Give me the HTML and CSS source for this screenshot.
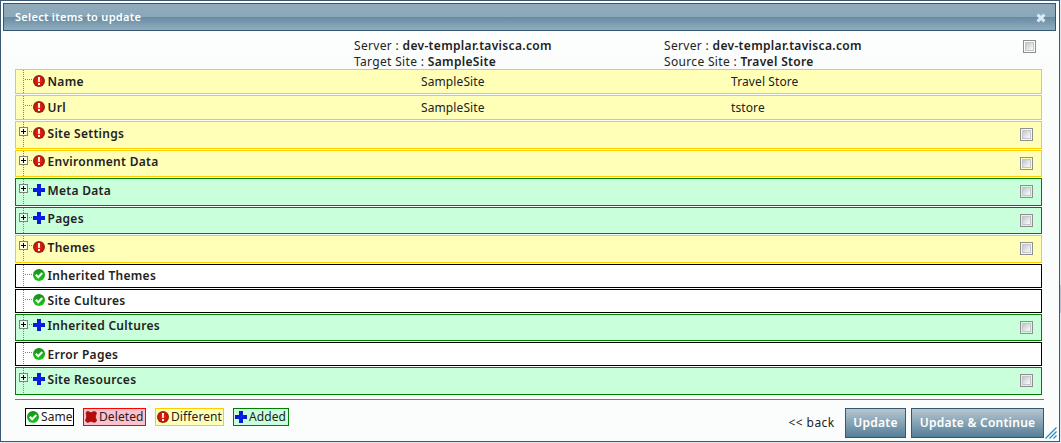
FILE: index.html
```html
<!DOCTYPE html>
<html lang="en">
<head>
<meta charset="utf-8">
<title>Select items to update</title>
<link rel="stylesheet" href="styles.css">
</head>
<body>
<svg class="defs" width="0" height="0" aria-hidden="true">
  <defs>
    <radialGradient id="red"><stop offset="0" stop-color="#f42a12"/><stop offset=".6" stop-color="#d51607"/><stop offset="1" stop-color="#8c2412"/></radialGradient>
    <linearGradient id="green" x2="0" y2="1"><stop offset="0" stop-color="#168c16"/><stop offset="1" stop-color="#16cb16"/></linearGradient>
    <linearGradient id="blue" x2="1" y2="1"><stop offset="0" stop-color="#0711a5"/><stop offset=".5" stop-color="#0820ee"/><stop offset="1" stop-color="#0710a2"/></linearGradient>
    <symbol id="different" viewBox="0 0 12 12"><circle cx="6" cy="6" r="6" fill="url(#red)"/><path d="M4.900 2h2.200l-.3 5H5.200zM5 8h2v2H5z" fill="#fff"/></symbol>
    <symbol id="same" viewBox="0 0 12 12"><circle cx="6" cy="6" r="6" fill="url(#green)"/><path d="M2.800 5.700l2.400 2.500L9.300 4" fill="none" stroke="#fff" stroke-width="2"/></symbol>
    <symbol id="added" viewBox="0 0 12 12"><path d="M4 0h4v4h4v4H8v4H4V8H0V4h4z" fill="url(#blue)"/></symbol>
    <symbol id="deleted" viewBox="0 0 12 12"><path d="M1 1.600L2.500.3 6 1.700 9.500.3 11.500 1.800 10.300 6l1.400 3.800-2 1.700L6 10.200l-3.500 1.300L.4 9.800 1.700 6z" fill="#b80b0b" stroke="#8d1010" stroke-width=".7"/></symbol>
  </defs>
</svg>
<div class="dialog">
  <div class="titlebar"><span class="title">Select items to update</span>
    <svg class="close" viewBox="0 0 10 10"><path d="M1.600 1.600l6.800 6.800m0-6.800L1.600 8.400" stroke="#dceaf5" stroke-width="3"/></svg>
  </div>
  <div class="sites">
    <div class="site"><div><span>Server : </span><b>dev-templar.tavisca.com</b></div><div><span>Target Site : </span><b>SampleSite</b></div></div>
    <div class="site"><div><span>Server : </span><b>dev-templar.tavisca.com</b></div><div><span>Source Site : </span><b>Travel Store</b></div></div>
    <i class="check"></i>
  </div>
  <div class="rows">
    <div class="row different h25"><i class="tree"></i><svg><use href="#different"/></svg><b>Name</b><span class="value">SampleSite</span><span class="value">Travel Store</span></div>
    <div class="row different h25"><i class="tree"></i><svg><use href="#different"/></svg><b>Url</b><span class="value">SampleSite</span><span class="value">tstore</span></div>
    <div class="row different h28"><i class="tree plus"></i><svg><use href="#different"/></svg><b>Site Settings</b><i class="check"></i></div>
    <div class="row different h27"><i class="tree plus"></i><svg><use href="#different"/></svg><b>Environment Data</b><i class="check"></i></div>
    <div class="row added h28"><i class="tree plus"></i><svg><use href="#added"/></svg><b>Meta Data</b><i class="check"></i></div>
    <div class="row added h27"><i class="tree plus"></i><svg><use href="#added"/></svg><b>Pages</b><i class="check"></i></div>
    <div class="row different h28"><i class="tree plus"></i><svg><use href="#different"/></svg><b>Themes</b><i class="check"></i></div>
    <div class="row same h24"><i class="tree"></i><svg><use href="#same"/></svg><b>Inherited Themes</b></div>
    <div class="row same h24"><i class="tree"></i><svg><use href="#same"/></svg><b>Site Cultures</b></div>
    <div class="row added h27"><i class="tree plus"></i><svg><use href="#added"/></svg><b>Inherited Cultures</b><i class="check"></i></div>
    <div class="row same h24 low"><i class="tree"></i><svg><use href="#same"/></svg><b>Error Pages</b></div>
    <div class="row added h28"><i class="tree plus"></i><svg><use href="#added"/></svg><b>Site Resources</b><i class="check"></i></div>
  </div>
  <div class="footer">
    <div class="legend">
      <div class="key same k1"><svg><use href="#same"/></svg><span>Same</span></div>
      <div class="key deleted k2"><svg><use href="#deleted"/></svg><span>Deleted</span></div>
      <div class="key different k3"><svg><use href="#different"/></svg><span>Different</span></div>
      <div class="key added k4"><svg><use href="#added"/></svg><span>Added</span></div>
    </div>
    <div class="actions"><a class="back">&lt;&lt; back</a><div class="button update">Update</div><div class="button continue">Update &amp; Continue</div></div>
  </div>
  <svg class="grip" viewBox="0 0 12 12"><path d="M.5 11.500l11-11m-7 11l7-7m-3 7l3-3" stroke="#2088d0" stroke-width="1.200" fill="none"/></svg>
</div>
<div class="edge"></div>
</body>
</html>
```

FILE: styles.css
```css
*, *::before { box-sizing: border-box; }
body { margin: 0; width: 1061px; height: 443px; overflow: hidden; display: flex; background: #dfe8f0; font: 12px/16px "Noto Sans", "Open Sans", sans-serif; color: #222; }
.defs { position: absolute; }
b { font-weight: 600; }
.dialog { position: relative; width: 1060px; height: 442px; border: 1px solid #3b5875; background: linear-gradient(#fff, #fbfdfd 60px); padding: 2px; }
.edge { width: 1px; height: 28px; margin-top: 285px; background: #b9c3d4; }
.titlebar { display: flex; justify-content: space-between; width: 1053px; height: 28px; border: 1px solid #355772; background: linear-gradient(#8faabb 0, #8ba8b9 13px, #668ca3 13px, #92adbd 26px); padding: 5px 9px 0 11px; color: #fff; }
.title { font-size: 11px; font-weight: 600; letter-spacing: .28px; }
.close { width: 10px; height: 10px; margin-top: 4px; }
.sites { display: flex; height: 38px; padding: 7px 0 0 351px; }
.site { width: 310px; white-space: pre; letter-spacing: .33px; }
.sites .check { margin: 2px 0 0 49px; }
.check { width: 13px; height: 13px; flex: none; border: 1px solid #8e8f8f; background: linear-gradient(135deg, #b9bec6, #f6f6f6 80%) content-box #f4f4f4; padding: 1px; outline: 1px solid #c4c6c9; outline-offset: -3px; }
.rows { display: flex; flex-direction: column; gap: 1px; padding-left: 12px; }
.row { display: flex; width: 1027px; border: 1px solid; padding-left: 3px; }
.h24 { height: 24px; } .h25 { height: 25px; } .h27 { height: 27px; } .h28 { height: 28px; }
.different { border-color: #fc0; background: #ffffb8; }
.added { border-color: #008000; background: #c9ffdb; }
.same { border-color: #000; background: #fff; }
.deleted { border-color: red; background: #ffc0cb; }
.row svg { width: 12px; height: 12px; flex: none; margin-top: 5px; }
.h24 svg, .h27 svg { margin-top: 4px; }
.row b { width: 373px; margin: 4px 0 0 2.5px; letter-spacing: .3px; }
.h24 b, .h27 b { margin-top: 3px; }
.low svg { margin-top: 5px; }
.low b { margin-top: 4px; }
.value { width: 310px; margin-top: 4px; letter-spacing: .1px; position: relative; left: .5px; }
.row .check { margin: 6px 8px 0 auto; }
.row > .tree { width: 14px; flex: none; background: repeating-linear-gradient(#808080 0 1px, transparent 1px 2px) 4px 0 / 1px 100% no-repeat, repeating-linear-gradient(90deg, #808080 0 1px, transparent 1px 2px) 6px 9px / 8px 1px no-repeat; }
.tree.plus::before { content: ""; display: block; width: 9px; height: 9px; margin-top: 5px; border: 1px solid #808080; background: linear-gradient(#000, #000) 1px 3px / 5px 1px no-repeat, linear-gradient(#000, #000) 3px 1px / 1px 5px no-repeat, #fff; }
.added .plus::before { background-color: #dfffea; }
.different .plus::before { background-color: #ffffdc; }
.footer { display: flex; justify-content: space-between; width: 1029px; margin: 4px 0 0 12px; border-top: 1px solid #5b82a0; padding: 8px 0 0 10px; }
.legend { display: flex; gap: 9px; letter-spacing: .1px; }
.key { display: flex; height: 18px; border-width: 1px; border-style: solid; padding: 0 1px; }
.key svg { width: 12px; height: 12px; margin: 2px 2px 0 0; flex: none; }
.k1 { width: 49px; } .k2 { width: 63px; } .k3 { width: 69px; } .k4 { width: 56px; }
.row.different, .key.different { border-color: #fc0; }
.row.added, .key.added { border-color: #008000; }
.row.same, .key.same { border-color: #000; }
.row.deleted, .key.deleted { border-color: red; }
.actions { display: flex; }
.back { margin: 7px 10.500px 0 0; letter-spacing: .4px; }
.button { height: 30px; border: 1px solid #355772; background: linear-gradient(#b6c7d1, #557e98); color: #fff; font-weight: 600; line-height: 28px; text-align: center; letter-spacing: .25px; }
.update { width: 61px; margin-right: 5px; }
.continue { width: 133px; }
.grip { position: absolute; right: 2px; bottom: 2px; width: 12px; height: 12px; }
```
